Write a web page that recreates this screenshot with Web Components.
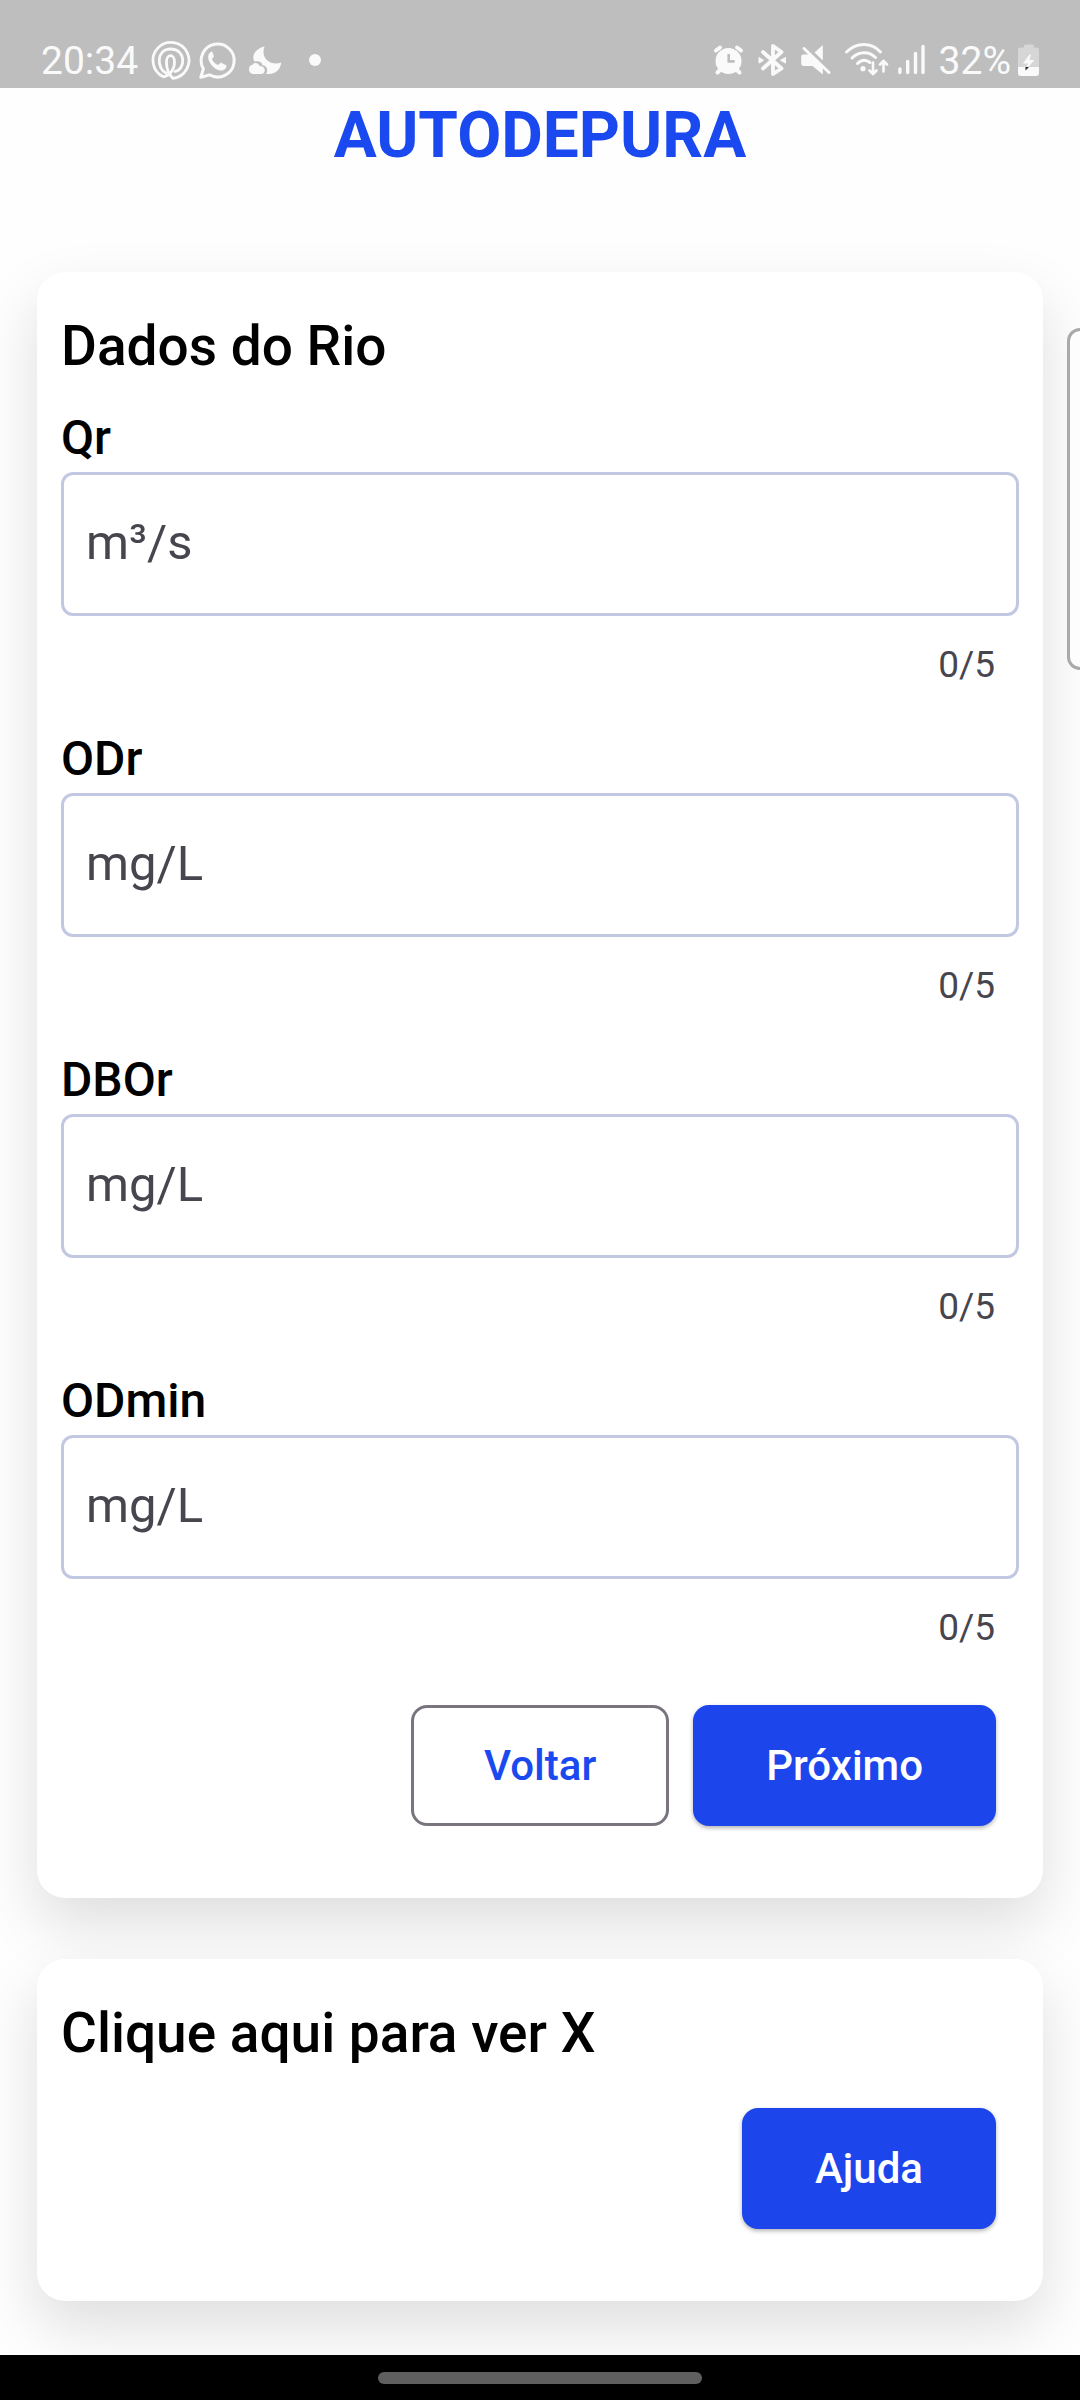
<!DOCTYPE html>
<html lang="pt-BR">
<head>
<meta charset="utf-8">
<meta name="viewport" content="width=device-width, initial-scale=1">
<title>AUTODEPURA</title>
<style>
  body { margin: 0; background: #fefefe; color: #000; font-family: Roboto, sans-serif; }
</style>
</head>
<body>
<autodepura-app></autodepura-app>
<script>
const define = (name, html, init) => {
  const template = document.createElement('template');
  template.innerHTML = html;
  customElements.define(name, class extends HTMLElement {
    connectedCallback() {
      if (this.shadowRoot) return;
      this.attachShadow({ mode: 'open' }).append(template.content.cloneNode(true));
      if (init) init(this, this.shadowRoot);
    }
  });
};

define('status-bar', `
<style>
  :host { display: flex; justify-content: space-between; height: 48px; padding: 37px 40px 3px 41px; background: #bebebe; color: #fafafa; font-size: 39px; line-height: 48px; }
  div { display: flex; gap: 8px; }
  svg { display: block; height: 48px; overflow: visible; fill: #fafafa; }
  .line { fill: none; stroke: #fafafa; stroke-width: 3; stroke-linecap: round; stroke-linejoin: round; }
</style>
<div>
  <span>20:34</span>
  <svg width="45" viewBox="146 37 45 48" aria-hidden="true"><g class="line" style="stroke-width:2.8"><path d="M173 78.3A18 18 0 1 0 163.500 76.800C169 76 174.500 70 174.500 62C174.500 53.500 166.500 53.500 166.500 62C166.500 70 169 75 173 78.300"/><path d="M166 73C157 69 155.500 49 170.800 49C186 49 186 69 175 71.500"/></g></svg>
  <svg width="38" viewBox="199 37 38 48" aria-hidden="true"><path class="line" d="M200.800 77.300L203.400 68.800A16.500 16.500 0 1 1 209.600 74.900Z"/><path d="M211.500 51.500c-3 1.500-4 4.500-3 8c2 6 7 10.500 12.500 11c3 0 5.500-2 5.500-5l-5.500-3-3 2.600c-3-1.200-5-3.300-6-6l2-2.600-1.800-5Z"/></svg>
  <svg width="40" viewBox="245 37 40 48" aria-hidden="true"><path d="M264.600 46.200C252.500 49.500 251.500 59 255 61.600C259.500 60.500 262 62.500 262.600 65.200C267 65.500 268.500 70 266.200 73.800C275.500 75 280.500 69.500 281.200 62.600C270 66.500 260 57.500 264.600 46.200Z"/><path d="M253 74a4.700 4.700 0 0 1-.5-9.200c1.500-2.800 6-2.300 7 1.200c2.500-.5 5.200 1.300 5.200 4a4 4 0 0 1-4 4Z"/></svg>
  <svg width="28" viewBox="293 37 28 48" aria-hidden="true"><circle cx="315" cy="60" r="6"/></svg>
</div>
<div>
  <svg width="36" viewBox="712 37 36 48" aria-hidden="true"><circle cx="728.500" cy="61" r="13"/><path class="line" style="stroke-width:4" d="M716 50.500l4-3M741 50.500l-4-3M720 70l-2.500 2.500M737 70l2.500 2.500"/><path d="M728.700 54v7.400h6" fill="none" stroke="#bebebe" stroke-width="2.600"/></svg>
  <svg width="36" viewBox="756 37 36 48" aria-hidden="true"><path class="line" style="stroke-width:3.800" d="M763 52L781.500 68.500L773 74V46L781.500 52L763 68.500"/><path d="M759 57.500l4.500 2.800-4.500 2.800ZM785.500 57.500l-5 2.800 5 2.800Z" stroke="#fafafa" stroke-linejoin="round"/></svg>
  <svg width="36" viewBox="800 37 36 48" aria-hidden="true"><path d="M801.200 56.500q0-2 2-2h6.300l13.300 13.500v6.400L812.500 66h-9q-2.300 0-2.300-2.300ZM822.800 45v15.500L814.500 52.500Z"/><path class="line" d="M804 48.500L829 72.500"/></svg>
  <svg width="44" viewBox="844 37 44 48" aria-hidden="true"><g class="line"><path d="M846.500 52c10-10 25-10 34 0M852 58c7-7 17-7 23.500-.5M857.500 63.500c4-4 8.500-4 12.500-1"/><path style="stroke-width:2.600" d="M873 62.500v11M869.500 70.500l3.500 3.700 3.500-3.700M883.500 71.500v-10M880 64.500l3.500-3.700 3.500 3.700"/></g><circle cx="863" cy="68.700" r="2.600"/></svg>
  <svg width="35" viewBox="896 37 35 48" aria-hidden="true"><path d="M899.900 69v3.500M907.700 61.500v11M915.500 53.500v19M923 46.500v26" class="line" style="stroke-width:3.400"/></svg>
  <span>32%</span>
  <svg width="21" viewBox="1019 37 21 48" aria-hidden="true"><path opacity=".4" d="M1018 67V50q0-2.500 2.500-2.500h3.500v-1.500q0-1.500 1.500-1.500h7q1.500 0 1.500 1.500v1.500h2.500q2.500 0 2.500 2.500v17Z"/><path d="M1018 67h21v6q0 3-3 3h-15q-3 0-3-3Z"/><path d="M1029.500 54.500l-6.500 9h5l-2.500 6.500 9-10h-5l1.500-5.500Z"/><path fill="#222" d="M1025.500 67h3.500l-3.500 3.500Z"/></svg>
</div>`);

define('surface-card', `
<style>
  :host { display: flex; flex-direction: column; padding: 42px 24px 72px; border-radius: 28px; background: #fff; box-shadow: 0 26px 60px rgba(0,0,0,.13); }
  h2 { margin: 0; font-size: 55px; line-height: 64px; font-weight: 500; }
</style>
<h2></h2><slot></slot>`, (host, root) => {
  root.querySelector('h2').textContent = host.getAttribute('heading');
});

define('measure-field', `
<style>
  :host { display: flex; flex-direction: column; }
  label { padding-bottom: 4px; font-size: 48px; line-height: 60px; font-weight: 500; }
  input { box-sizing: border-box; width: 100%; height: 144px; margin: 0 0 28px; padding: 0 22px 4px; border: 3px solid #c2c8e1; border-radius: 12px; outline: 0; background: #fff; color: #47464f; font: 400 49px Roboto, sans-serif; }
  input::placeholder { color: #47464f; opacity: 1; }
  output { align-self: flex-end; margin-right: 24px; color: #47464f; font-size: 37px; line-height: 42px; }
</style>
<label for="value"></label>
<input id="value" type="text" inputmode="decimal" maxlength="5">
<output for="value">0/5</output>`, (host, root) => {
  const input = root.querySelector('input');
  root.querySelector('label').textContent = host.getAttribute('label');
  input.placeholder = host.getAttribute('unit');
  input.addEventListener('input', () => { root.querySelector('output').textContent = input.value.length + '/5'; });
});

define('action-button', `
<style>
  :host { display: block; }
  button { box-sizing: border-box; height: 121px; margin: 0; padding: 0 70px; border: 3px solid #1c46eb; border-radius: 16px; background: #1c46eb; color: #fff; font: 500 42px Roboto, sans-serif; box-shadow: 0 2px 4px rgba(0,0,0,.3); }
  :host([outlined]) button { border-color: #79747e; background: #fff; color: #1a49ef; box-shadow: none; }
</style>
<button type="button"><slot></slot></button>`);

define('edge-handle', `
<style>
  :host { display: block; position: absolute; top: 328px; right: 0; box-sizing: border-box; width: 13px; height: 342px; border: 3px solid #a9a9a9; border-right: 0; border-radius: 16px 0 0 16px; background: rgba(255,255,255,.6); }
</style>`);

define('navigation-bar', `
<style>
  :host { display: flex; justify-content: center; align-items: center; height: 45px; background: #000; }
  span { width: 30%; height: 12px; border-radius: 6px; background: #5f5f5f; }
</style>
<span></span>`);

define('autodepura-app', `
<style>
  :host { display: flex; flex-direction: column; min-height: 100vh; position: relative; }
  main { flex: 1; display: flex; flex-direction: column; gap: 61px; padding: 0 37px 54px; overflow: hidden; }
  h1 { margin: 0; padding: 10px 0 37px; text-align: center; color: #1a49ef; font-size: 64px; line-height: 76px; font-weight: 700; }
  .fields { display: flex; flex-direction: column; gap: 43px; margin: 30px 0 56px; }
  .actions { display: flex; justify-content: flex-end; gap: 24px; padding-right: 23px; }
  .help { margin-top: 43px; }
</style>
<status-bar></status-bar>
<main>
  <h1>AUTODEPURA</h1>
  <surface-card heading="Dados do Rio">
    <div class="fields">
      <measure-field label="Qr" unit="m³/s"></measure-field>
      <measure-field label="ODr" unit="mg/L"></measure-field>
      <measure-field label="DBOr" unit="mg/L"></measure-field>
      <measure-field label="ODmin" unit="mg/L"></measure-field>
    </div>
    <div class="actions">
      <action-button outlined>Voltar</action-button>
      <action-button>Próximo</action-button>
    </div>
  </surface-card>
  <surface-card heading="Clique aqui para ver X">
    <div class="actions help"><action-button>Ajuda</action-button></div>
  </surface-card>
</main>
<navigation-bar></navigation-bar>
<edge-handle></edge-handle>`);
</script>
</body>
</html>
